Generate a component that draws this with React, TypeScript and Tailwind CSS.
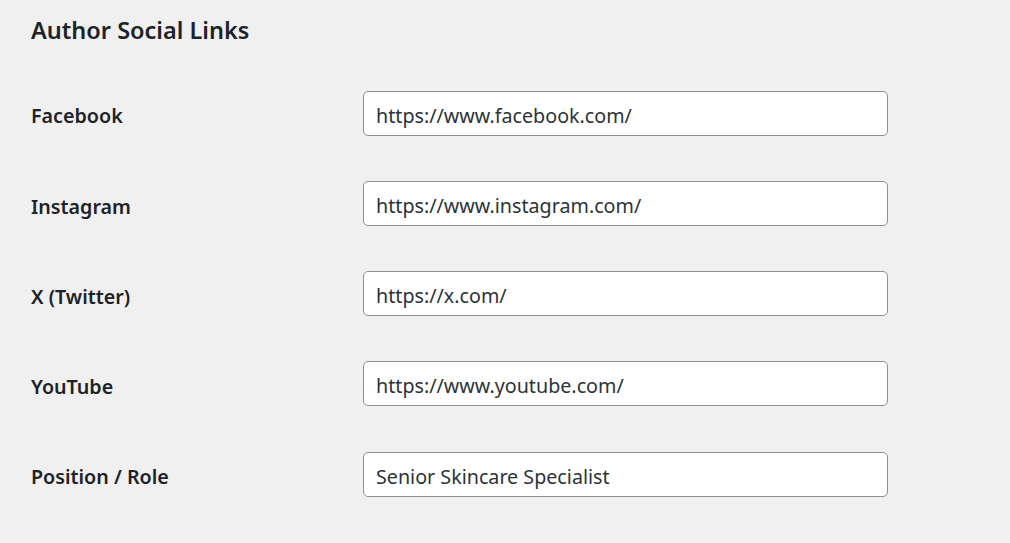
const rows = [
  { label: "Facebook", value: "https://www.facebook.com/" },
  { label: "Instagram", value: "https://www.instagram.com/" },
  { label: "X (Twitter)", value: "https://x.com/" },
  { label: "YouTube", value: "https://www.youtube.com/" },
  { label: "Position / Role", value: "Senior Skincare Specialist" },
]

export default function App() {
  return (
    <div className="min-h-[543px] bg-[#f0f0f1] pl-[31px] pt-[14px] text-[#1d2327] font-['Noto_Sans',sans-serif]">
      <h2 className="text-[23.5px] font-semibold leading-[32px]">Author Social Links</h2>
      <div className="mt-[22px] grid grid-cols-[332px_525px]">
        {rows.map((row) => (
          <div key={row.label} className="contents">
            <div className="flex h-[90.25px] items-center pt-[6px] text-[19.7px] font-semibold">{row.label}</div>
            <div className="flex h-[90.25px] items-center">
              <input
                type="text"
                defaultValue={row.value}
                className="h-[45px] w-full rounded-[5px] border border-[#8c8f94] bg-white px-[12px] pt-[4px] text-[19.7px] text-[#2c3338] outline-none"
              />
            </div>
          </div>
        ))}
      </div>
    </div>
  )
}
